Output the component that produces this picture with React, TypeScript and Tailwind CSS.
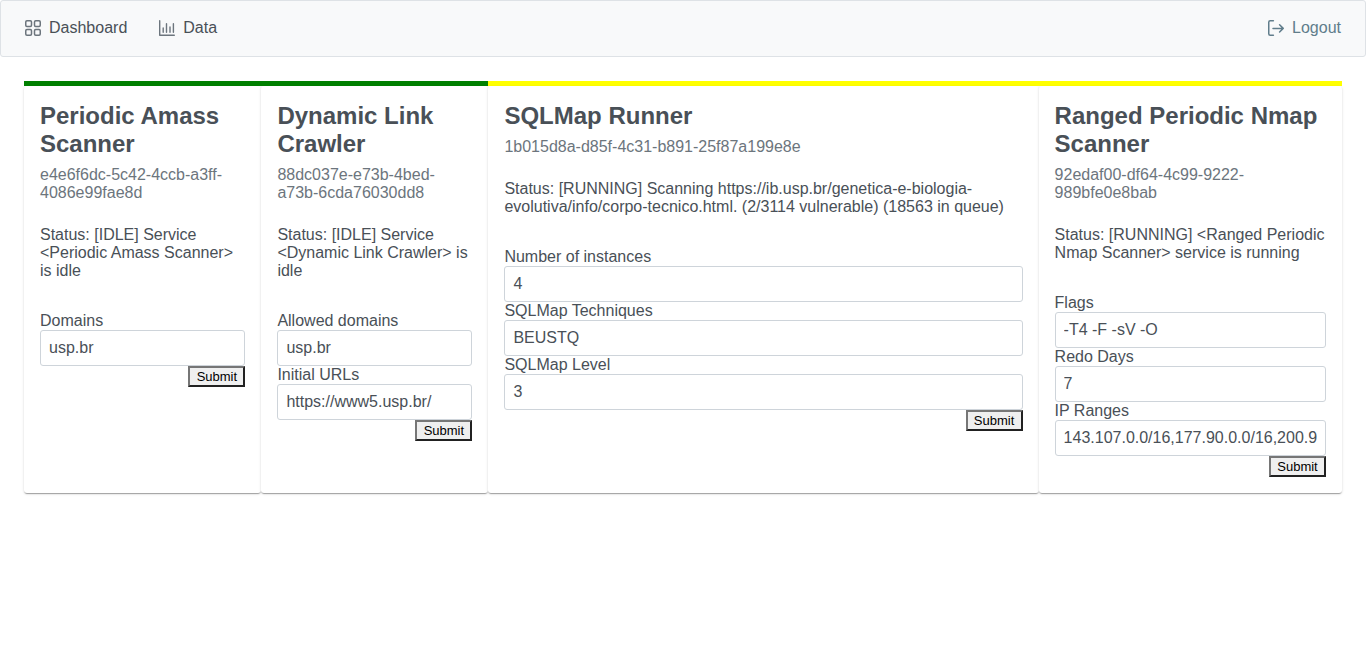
import { useId } from "react";

type Field = { label: string; value: string };

type Service = {
  id: string;
  name: string;
  status: string;
  running: boolean;
  fields: Field[];
};

const services: Service[] = [
  {
    id: "e4e6f6dc-5c42-4ccb-a3ff-4086e99fae8d",
    name: "Periodic Amass Scanner",
    status: "[IDLE] Service <Periodic Amass Scanner> is idle",
    running: false,
    fields: [{ label: "Domains", value: "usp.br" }],
  },
  {
    id: "88dc037e-e73b-4bed-a73b-6cda76030dd8",
    name: "Dynamic Link Crawler",
    status: "[IDLE] Service <Dynamic Link Crawler> is idle",
    running: false,
    fields: [
      { label: "Allowed domains", value: "usp.br" },
      { label: "Initial URLs", value: "https://www5.usp.br/" },
    ],
  },
  {
    id: "1b015d8a-d85f-4c31-b891-25f87a199e8e",
    name: "SQLMap Runner",
    status:
      "[RUNNING] Scanning https://ib.usp.br/genetica-e-biologia-evolutiva/info/corpo-tecnico.html. (2/3114 vulnerable) (18563 in queue)",
    running: true,
    fields: [
      { label: "Number of instances", value: "4" },
      { label: "SQLMap Techniques", value: "BEUSTQ" },
      { label: "SQLMap Level", value: "3" },
    ],
  },
  {
    id: "92edaf00-df64-4c99-9222-989bfe0e8bab",
    name: "Ranged Periodic Nmap Scanner",
    status: "[RUNNING] <Ranged Periodic Nmap Scanner> service is running",
    running: true,
    fields: [
      { label: "Flags", value: "-T4 -F -sV -O" },
      { label: "Redo Days", value: "7" },
      { label: "IP Ranges", value: "143.107.0.0/16,177.90.0.0/16,200.9" },
    ],
  },
];

const GridIcon = () => (
  <svg className="size-4 text-[#6c757d]" viewBox="0 0 16 16" fill="none" stroke="currentColor" strokeWidth="1.5">
    <rect x="0.75" y="0.75" width="5.75" height="5.75" rx="1.2" />
    <rect x="9.5" y="0.75" width="5.75" height="5.75" rx="1.2" />
    <rect x="0.75" y="9.5" width="5.75" height="5.75" rx="1.2" />
    <rect x="9.5" y="9.5" width="5.75" height="5.75" rx="1.2" />
  </svg>
);

const ChartIcon = () => (
  <svg className="size-4 text-[#6c757d]" viewBox="0 0 16 16" fill="none" stroke="currentColor" strokeWidth="1.4" strokeLinecap="round" strokeLinejoin="round">
    <path d="M0.7 0.7V15.3H15.3M4.2 8V12.2M7.5 3.8V12.2M11 7V12.2M14.4 3.8V12.2" />
  </svg>
);

const LogoutIcon = () => (
  <svg className="size-4" viewBox="0 0 16 16" fill="none" stroke="currentColor" strokeWidth="1.5" strokeLinecap="round" strokeLinejoin="round">
    <path d="M5.4 0.75H2.2Q0.75 0.75 0.75 2.2V13.8Q0.75 15.25 2.2 15.25H5.4M5 8.4H15.2M11.6 4.8L15.2 8.4L11.6 12" />
  </svg>
);

const Navbar = () => {
  return (
    <nav className="flex items-center justify-between rounded-[3px] border border-[#dee2e6] bg-[#f8f9fa] p-2">
      <div className="flex">
        <a href="#dashboard" className="flex items-start gap-2 px-4 pt-[11px] pb-3 leading-[15px]">
          <GridIcon />
          Dashboard
        </a>
        <a href="#data" className="flex items-start gap-2 px-4 pt-[11px] pb-3 leading-[15px]">
          <ChartIcon />
          Data
        </a>
      </div>
      <a href="#logout" className="flex items-start gap-2 px-4 pt-[11px] pb-3 leading-[15px] text-[#607d8b]">
        <LogoutIcon />
        Logout
      </a>
    </nav>
  );
};

const TextField = ({ label, value }: Field) => {
  const id = useId();
  return (
    <div>
      <label htmlFor={id} className="block">
        {label}
      </label>
      <input
        id={id}
        type="text"
        defaultValue={value}
        className="block h-9 w-full rounded-[3px] border border-[#ced4da] bg-white px-2 outline-none focus:border-[#607d8b]"
      />
    </div>
  );
};

const ServiceCard = ({ service }: { service: Service }) => {
  return (
    <div className={service.running ? "flex border-t-5 border-[#ffff00]" : "flex border-t-5 border-[#008000]"}>
      <section className="w-full min-w-0 rounded-[3px] bg-white p-4 shadow-[0_2px_1px_-1px_rgba(0,0,0,0.2),0_1px_1px_0_rgba(0,0,0,0.14),0_1px_3px_0_rgba(0,0,0,0.12)]">
        <h2 className="mb-2 text-2xl leading-7 font-bold">{service.name}</h2>
        <p className="mb-6 text-[#6c757d]">{service.id}</p>
        <p className="mb-8">{`Status: ${service.status}`}</p>
        <form onSubmit={(e) => e.preventDefault()}>
          {service.fields.map((field) => (
            <TextField key={field.label} {...field} />
          ))}
          <div className="flex justify-end">
            <button
              type="submit"
              className="w-[57px] border-2 border-t-[#767676] border-r-[#212121] border-b-[#212121] border-l-[#767676] bg-[#efefef] py-px text-[13px] leading-[15px] text-black"
            >
              Submit
            </button>
          </div>
        </form>
      </section>
    </div>
  );
};

export default function App() {
  return (
    <div className="font-['Liberation_Sans',Arial,sans-serif] text-base leading-[18px] text-[#495057]">
      <Navbar />
      <main className="grid grid-cols-[2374fr_2270fr_5502fr_3034fr] p-6">
        {services.map((service) => (
          <ServiceCard key={service.id} service={service} />
        ))}
      </main>
    </div>
  );
}
